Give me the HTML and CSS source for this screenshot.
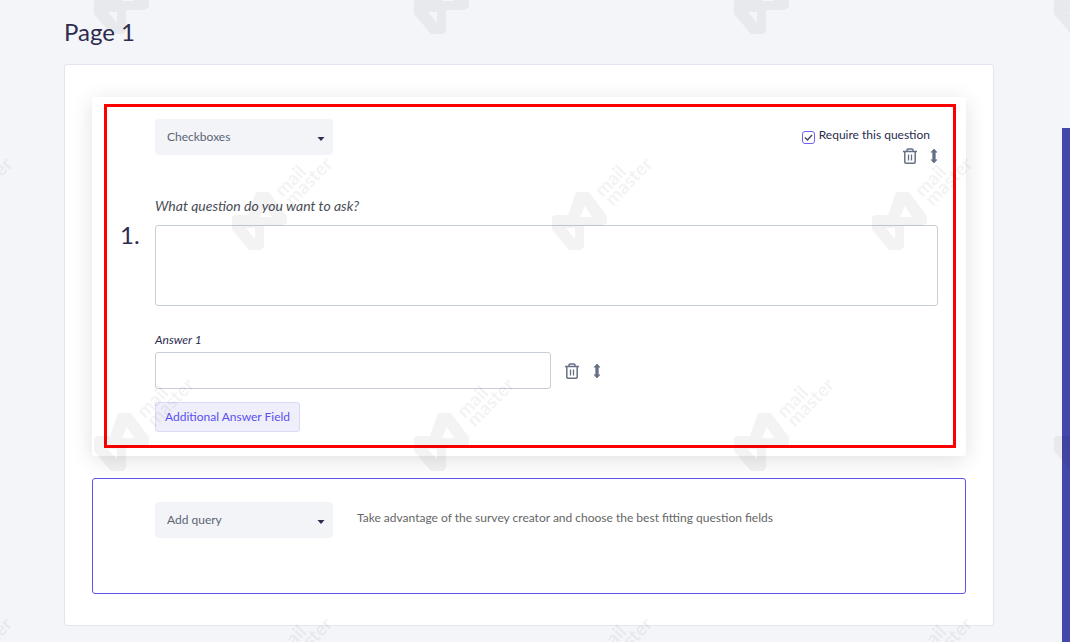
FILE: index.html
```html
<!DOCTYPE html>
<html lang="en">
<head>
<meta charset="utf-8">
<title>Survey creator</title>
<link rel="stylesheet" href="styles.css">
</head>
<body>
<svg class="defs" width="0" height="0" aria-hidden="true">
  <symbol id="trash" viewBox="0 0 14 16">
    <path d="M0 3.500H14M4 3V2Q4 1 5 1H9Q10 1 10 2V3M1.800 4V14Q1.800 15.200 3 15.200H11Q12.200 15.200 12.200 14V4" fill="none" stroke="currentColor" stroke-width="1.500"/>
    <path d="M5.500 6.500V12.500M8.500 6.500V12.500" fill="none" stroke="currentColor" stroke-width="1.300"/>
  </symbol>
  <symbol id="move" viewBox="0 0 8 16">
    <path d="M4 1 6.800 4.200H5.200V11.800H6.800L4 15 1.200 11.800H2.800V4.200H1.200Z" fill="currentColor" stroke="currentColor" stroke-width=".8" stroke-linejoin="round"/>
  </symbol>
</svg>
<div class="layout">
  <main class="page">
    <h1 class="title">Page 1</h1>
    <section class="panel">
      <article class="question">
        <div class="highlight">
          <header class="toolbar">
            <select class="picker" aria-label="Question type"><option>Checkboxes</option></select>
            <div class="options">
              <label class="require"><input class="tick" type="checkbox" checked>Require this question</label>
              <div class="actions">
                <button class="icon" type="button" aria-label="Delete question"><svg width="14" height="16"><use href="#trash"/></svg></button>
                <button class="icon" type="button" aria-label="Move question"><svg width="8" height="16"><use href="#move"/></svg></button>
              </div>
            </div>
          </header>
          <label class="prompt" for="question-text">What question do you want to ask?</label>
          <span class="number">1.</span>
          <textarea class="field area" id="question-text"></textarea>
          <label class="answer-label" for="answer-1">Answer 1</label>
          <div class="answer">
            <input class="field line" id="answer-1" type="text">
            <button class="icon" type="button" aria-label="Delete answer"><svg width="14" height="16"><use href="#trash"/></svg></button>
            <button class="icon" type="button" aria-label="Move answer"><svg width="8" height="16"><use href="#move"/></svg></button>
          </div>
          <button class="add" type="button">Additional Answer Field</button>
        </div>
      </article>
      <article class="query">
        <select class="picker" aria-label="Add query"><option>Add query</option></select>
        <p class="hint">Take advantage of the survey creator and choose the best fitting question fields</p>
      </article>
    </section>
  </main>
  <aside class="rail"></aside>
</div>
<svg class="watermark" aria-hidden="true">
  <defs>
    <g id="mark">
      <path fill-rule="evenodd" d="M0 25 3 23H16L24 0H37L55 24V31L50 34H32V55L29 58H17L0 38ZM33 14 40 25H28ZM14 36H23V47Z"/>
      <text class="mark-text" transform="translate(51 6) rotate(-46)">mail</text>
      <text class="mark-text" transform="translate(61 15) rotate(-46)">master</text>
    </g>
    <g id="row">
      <use href="#mark" x="0"/><use href="#mark" x="320"/><use href="#mark" x="640"/><use href="#mark" x="960"/>
    </g>
  </defs>
  <use href="#row" x="94" y="-24"/>
  <use href="#row" x="-88" y="192"/>
  <use href="#row" x="94" y="413"/>
  <use href="#row" x="-88" y="652"/>
</svg>
</body>
</html>
```
FILE: styles.css
```css
* { box-sizing: border-box; }
body {
  margin: 0;
  background: #f3f5f9;
  color: #2b2c4e;
  font: 12px/16px Lato, "Open Sans", sans-serif;
}
.defs { position: absolute; }
.layout { display: flex; min-height: 100vh; }
.page { flex: 1; padding: 16px 68px 16px 64px; }
.rail { width: 8px; margin-top: 128px; background: #4447ab; }
.title { margin: 0 0 16px; font-size: 24px; line-height: 32px; font-weight: 400; }
.panel {
  display: grid;
  gap: 22px;
  padding: 32px 27px 31px;
  background: #fff;
  border: 1px solid #e3e6ef;
  border-radius: 3px;
}
.question {
  padding: 7px 10px 8px 12px;
  background: #fff;
  border-radius: 3px;
  box-shadow: 0 4px 22px rgba(0, 0, 0, .12);
}
.highlight {
  display: grid;
  grid-template-columns: 35px 1fr;
  padding: 12px 15px 13px 13px;
  border: 3px solid #f00;
}
.highlight > * { grid-column: 2; }
.toolbar { display: flex; justify-content: space-between; }
.picker {
  appearance: none;
  width: 178px;
  height: 36px;
  padding: 0 12px;
  border: 0;
  border-radius: 4px;
  background: #f3f4f8 url("data:image/svg+xml,%3Csvg xmlns='http://www.w3.org/2000/svg' viewBox='0 0 8 4'%3E%3Cpath d='M.5 0h7L4 4z' fill='%232b2c4e'/%3E%3C/svg%3E") no-repeat right 8px top 18px / 8px 4px;
  color: #5c6474;
  font: inherit;
}
.options { padding: 8px 0 0; }
.require { display: flex; gap: 4px; margin-right: 8px; color: #2b2c4e; }
.tick {
  appearance: none;
  width: 13px;
  height: 13px;
  margin: 4px 0 0;
  border: 1px solid #6c63f0;
  border-radius: 3px;
  background: url("data:image/svg+xml,%3Csvg xmlns='http://www.w3.org/2000/svg' viewBox='0 0 11 11'%3E%3Cpath d='M2 5.500 4.500 8 9 3' fill='none' stroke='%23484b63' stroke-width='1.500'/%3E%3C/svg%3E");
}
.actions { display: flex; justify-content: flex-end; gap: 13px; margin-top: 4px; }
.icon { display: flex; padding: 0; border: 0; background: none; color: #667085; }
.prompt { margin: 34px 0 11px; color: #4b4d55; font-size: 14px; font-style: italic; }
.number { grid-column: 1; font-size: 24px; line-height: 20px; }
.field { border: 1px solid #c7ced6; border-radius: 3px; background: #fff; font: inherit; }
.area { width: 100%; height: 81px; resize: none; }
.number, .area { grid-row: 3; }
.answer-label { margin: 26px 0 4px; font-style: italic; }
.answer { display: flex; align-items: center; gap: 14px; }
.line { width: 396px; height: 37px; }
.add {
  justify-self: start;
  height: 30px;
  margin-top: 13px;
  padding: 0 9px;
  border: 1px solid #d9dbf5;
  border-radius: 3px;
  background: #eeeffb;
  color: #5b50ee;
  font: inherit;
}
.query {
  display: flex;
  gap: 24px;
  min-height: 116px;
  padding: 23px 62px;
  border: 1px solid #5d54ec;
  border-radius: 3px;
}
.hint { margin: 8px 0 0; color: #666; }
.watermark {
  position: fixed;
  inset: 0;
  width: 100%;
  height: 100%;
  fill: #000;
  opacity: .05;
  pointer-events: none;
}
.mark-text { font: bold 19px Lato, sans-serif; }
```
